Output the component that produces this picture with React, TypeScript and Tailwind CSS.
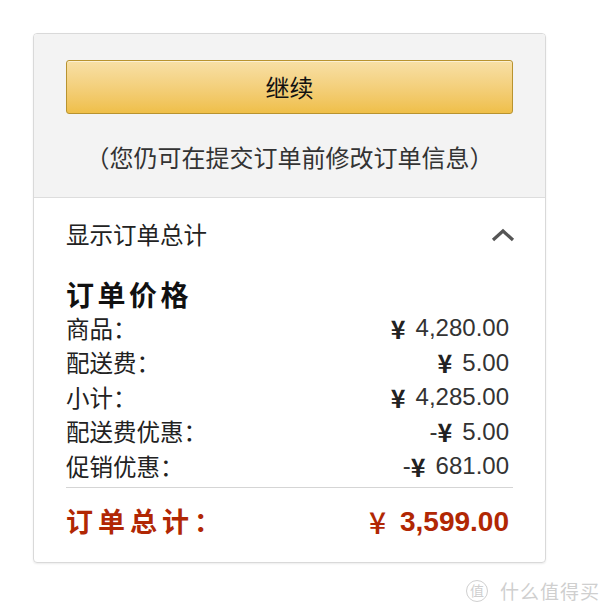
import React from "react";

const cjk = { fontFamily: '"Noto Sans CJK SC", "Noto Sans", sans-serif' };
const num = { fontFamily: '"Liberation Sans", Arial, sans-serif' };

function Row({ label, sign, value }: { label: string; sign?: string; value: string }) {
  return (
    <div className="flex h-[34.5px] items-center justify-between text-[23.5px] text-[#222]">
      <span style={cjk}>{label}</span>
      <span className="flex items-center pr-[4px]">
        {sign ? (
          <span style={num} className="text-[24px] text-[#333]">
            {sign}
          </span>
        ) : null}
        <span style={cjk} className="text-[25px] font-bold text-[#222]">
          ¥
        </span>
        <span style={num} className="ml-[10px] text-[24px] text-[#333]">
          {value}
        </span>
      </span>
    </div>
  );
}

export default function App() {
  return (
    <div className="relative h-[610px] w-[600px] bg-white pl-[33px] pt-[33px]">
      <div className="w-[513px] overflow-hidden rounded-[4px] border border-[#d9d9d9] shadow-[0_1px_2px_rgba(0,0,0,0.08)]">
        <div className="h-[164px] border-b border-[#dddddd] bg-[#f3f3f3] px-[32px] pt-[26px]">
          <button
            className="flex h-[54px] w-full items-center justify-center rounded-[3px] border border-[#b8932f] bg-gradient-to-b from-[#f8e0a6] to-[#efbf48] text-[24px] text-[#111] shadow-[inset_0_1px_0_rgba(255,255,255,0.5)]"
            style={cjk}
          >
            继续
          </button>
          <div className="mt-[28px] text-center text-[24px] leading-[30px] text-[#333]" style={cjk}>
            （您仍可在提交订单前修改订单信息）
          </div>
        </div>
        <div className="px-[32px] pb-[18px]">
          <div className="mt-[17px] flex h-[40px] items-center justify-between">
            <span className="text-[23.5px] text-[#222]" style={cjk}>
              显示订单总计
            </span>
            <svg width="24" height="14" viewBox="0 0 24 14" className="mr-[-2px]">
              <polyline points="2,12 12,3 22,12" fill="none" stroke="#555" strokeWidth="3.2" />
            </svg>
          </div>
          <div
            className="mt-[22px] flex h-[34px] items-center text-[28px] font-bold tracking-[3.5px] text-[#111]"
            style={cjk}
          >
            订单价格
          </div>
          <Row label="商品：" value="4,280.00" />
          <Row label="配送费：" value="5.00" />
          <Row label="小计：" value="4,285.00" />
          <Row label="配送费优惠：" sign="-" value="5.00" />
          <Row label="促销优惠：" sign="-" value="681.00" />
          <div className="mt-[3px] border-t border-[#d5d5d5]" />
          <div className="mt-[12px] flex h-[44px] items-center justify-between text-[#b12704]">
            <span className="text-[27px] font-bold tracking-[5px]" style={cjk}>
              订单总计：
            </span>
            <span className="flex items-center pr-[4px]">
              <span className="text-[30px] font-medium" style={cjk}>
                ¥
              </span>
              <span className="ml-[14px] text-[28px] font-bold" style={num}>
                3,599.00
              </span>
            </span>
          </div>
        </div>
      </div>
      <div className="absolute bottom-[5px] right-[0px] flex items-center text-[#cfcfcf]" style={cjk}>
        <span className="flex h-[22px] w-[22px] items-center justify-center rounded-full border-[1.5px] border-[#d0d0d0] text-[14px]">
          值
        </span>
        <span className="ml-[12px] text-[19px] tracking-[1px]">什么值得买</span>
      </div>
    </div>
  );
}
